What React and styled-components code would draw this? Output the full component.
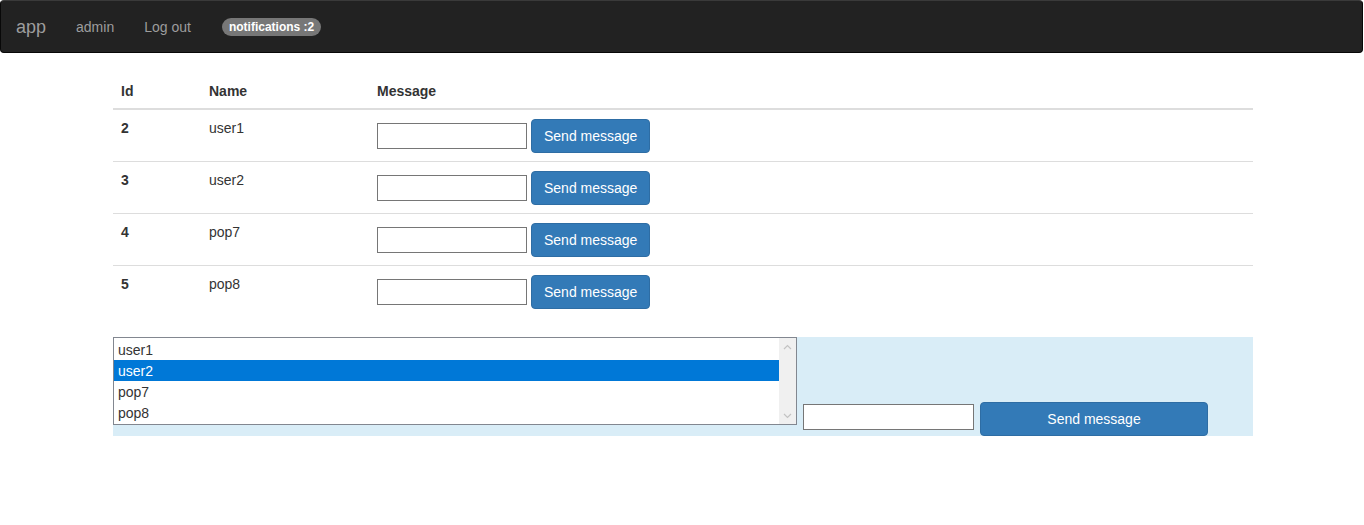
import React, { useState } from 'react';
import styled, { createGlobalStyle } from 'styled-components';

const GlobalStyle = createGlobalStyle`
	* { box-sizing: border-box; }
	body {
		margin: 0;
		font-family: "Liberation Sans", Arial, Helvetica, sans-serif;
		font-size: 14px;
		line-height: 1.42857143;
		color: #333;
		background: #fff;
	}
`;

const users = [
	{ id: 2, name: 'user1' },
	{ id: 3, name: 'user2' },
	{ id: 4, name: 'pop7' },
	{ id: 5, name: 'pop8' },
];

function App() {
	const [selected, setSelected] = useState('user2');

	return (
		<>
			<GlobalStyle />
			<Navbar>
				<Brand href="#">app</Brand>
				<NavLink href="#">admin</NavLink>
				<NavLink href="#">Log out</NavLink>
				<NavItem>
					<Badge>notifications :2</Badge>
				</NavItem>
			</Navbar>

			<Container>
				<Table>
					<thead>
						<tr>
							<Th width={88}>Id</Th>
							<Th width={168}>Name</Th>
							<Th>Message</Th>
						</tr>
					</thead>
					<tbody>
						{users.map((u) => (
							<tr key={u.id}>
								<Td bold>{u.id}</Td>
								<Td>{u.name}</Td>
								<Td>
									<MessageCell>
										<TextInput type="text" />
										<Button>Send message</Button>
									</MessageCell>
								</Td>
							</tr>
						))}
					</tbody>
				</Table>

				<InfoPanel>
					<ListBox role="listbox" aria-multiselectable="true">
						<Options>
							{users.map((u) => (
								<Option
									key={u.id}
									role="option"
									selected={selected === u.name}
									aria-selected={selected === u.name}
									onClick={() => setSelected(u.name)}
								>
									{u.name}
								</Option>
							))}
						</Options>
						<Scrollbar>
							<Arrow>
								<svg width="9" height="6" viewBox="0 0 9 6">
									<path d="M1 5 L4.5 1.5 L8 5" fill="none" stroke="#c3c3c3" strokeWidth="1.2" />
								</svg>
							</Arrow>
							<Arrow>
								<svg width="9" height="6" viewBox="0 0 9 6">
									<path d="M1 1 L4.5 4.5 L8 1" fill="none" stroke="#c3c3c3" strokeWidth="1.2" />
								</svg>
							</Arrow>
						</Scrollbar>
					</ListBox>
					<BulkInput type="text" />
					<Button wide>Send message</Button>
				</InfoPanel>
			</Container>
		</>
	);
}

export default App;

const Navbar = styled.nav`
	display: flex;
	align-items: center;
	height: 53px;
	margin-right: 1px;
	padding-top: 1px;
	background: #222;
	border: 1px solid #080808;
	border-top-color: #3a3a3a;
	border-radius: 4px;
`;

const Brand = styled.a`
	padding: 15px;
	font-size: 18px;
	line-height: 20px;
	color: #9d9d9d;
	text-decoration: none;
`;

const NavLink = styled.a`
	padding: 15px;
	line-height: 20px;
	color: #9d9d9d;
	text-decoration: none;
`;

const NavItem = styled.div`
	display: flex;
	align-items: center;
	padding: 15px 15px 15px 16px;
	height: 50px;
`;

const Badge = styled.span`
	display: inline-block;
	padding: 3px 7px;
	font-size: 12px;
	font-weight: bold;
	line-height: 1;
	color: #fff;
	background: #777;
	border-radius: 10px;
	white-space: nowrap;
`;

const Container = styled.div`
	width: 1170px;
	margin: 19px auto 0;
	padding: 0 14px 0 16px;
`;

const Table = styled.table`
	width: 100%;
	border-collapse: collapse;
	margin-bottom: 20px;
`;

const Th = styled.th`
	width: ${(p) => (p.width ? `${p.width}px` : 'auto')};
	padding: 9px 8px 7px;
	text-align: left;
	vertical-align: bottom;
	border-bottom: 2px solid #ddd;
	line-height: 20px;
`;

const Td = styled.td`
	padding: 8px 8px 8px;
	vertical-align: top;
	border-top: 1px solid #ddd;
	line-height: 20px;
	font-weight: ${(p) => (p.bold ? 'bold' : 'normal')};
`;

const MessageCell = styled.div`
	display: flex;
	align-items: center;
	gap: 4px;
	height: 35px;
`;

const TextInput = styled.input`
	width: 150px;
	height: 26px;
	padding: 1px 2px;
	border: 1px solid #767676;
	font: inherit;
	margin: 0;
`;

const Button = styled.button`
	width: ${(p) => (p.wide ? '228px' : 'auto')};
	height: 34px;
	padding: 6px 12px;
	font: inherit;
	line-height: 20px;
	color: #fff;
	background: #337ab7;
	border: 1px solid #2e6da4;
	border-radius: 4px;
	cursor: pointer;
	white-space: nowrap;
`;

const InfoPanel = styled.div`
	display: flex;
	align-items: flex-end;
	gap: 6px;
	background: #d9edf7;
`;

const ListBox = styled.div`
	display: flex;
	width: 684px;
	height: 88px;
	margin-bottom: 11px;
	border: 1px solid #828790;
	background: #fff;
`;

const Options = styled.div`
	flex: 1;
	padding: 1px 0;
`;

const Option = styled.div`
	height: 21px;
	padding: 1px 4px 0;
	line-height: 20px;
	color: ${(p) => (p.selected ? '#fff' : '#333')};
	background: ${(p) => (p.selected ? '#0078d7' : 'transparent')};
	cursor: default;
`;

const Scrollbar = styled.div`
	display: flex;
	flex-direction: column;
	justify-content: space-between;
	width: 17px;
	background: #f0f0f0;
`;

const Arrow = styled.div`
	display: flex;
	align-items: center;
	justify-content: center;
	height: 17px;
`;

const BulkInput = styled(TextInput)`
	width: 171px;
	margin-bottom: 6px;
`;
